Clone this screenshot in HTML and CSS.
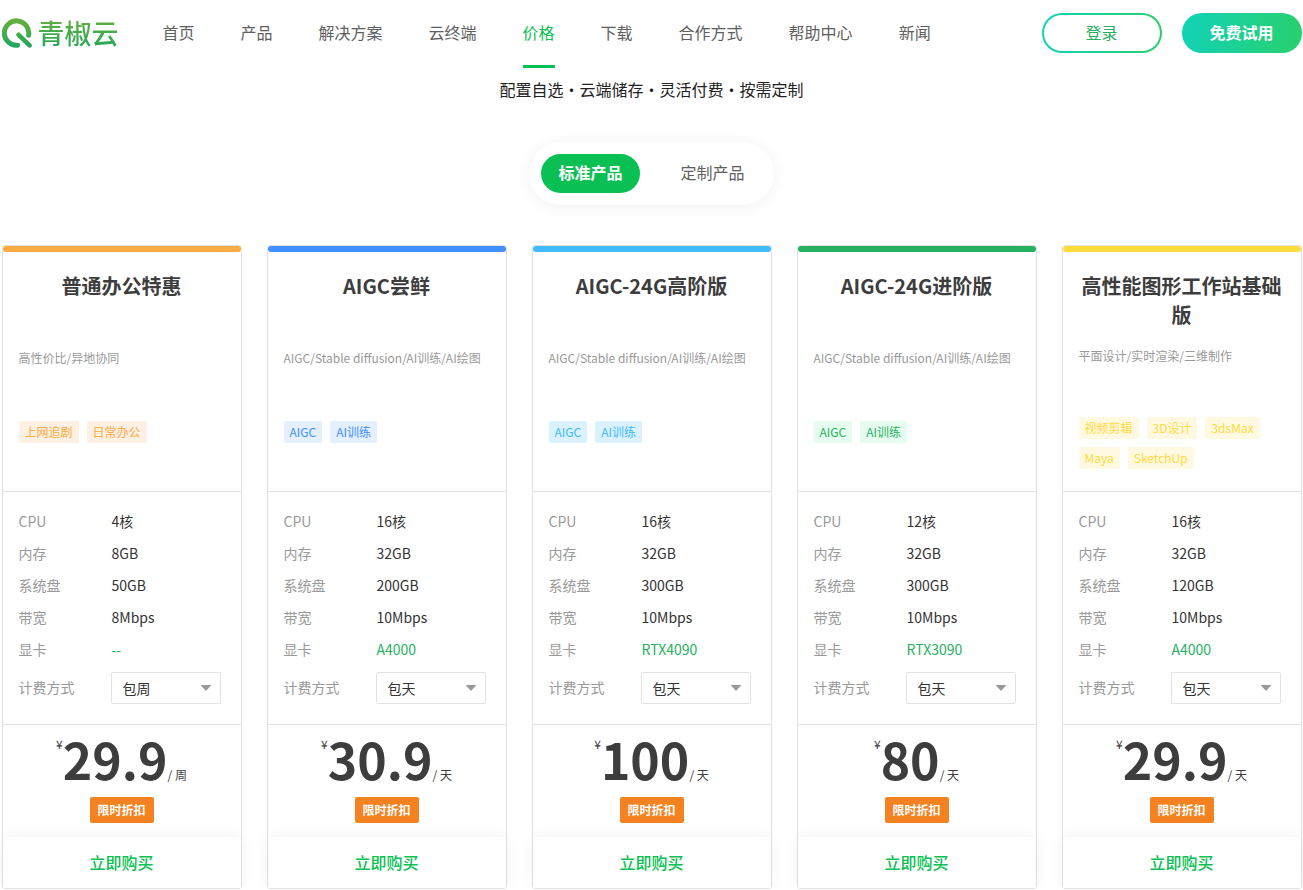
FILE: index.html
```html
<!DOCTYPE html>
<html lang="zh-CN">
<head>
<meta charset="utf-8">
<meta name="viewport" content="width=device-width, initial-scale=1">
<title>青椒云 - 价格</title>
<link rel="stylesheet" href="styles.css">
</head>
<body>
<header class="header container">
  <a class="logo" href="#">
    <svg class="logo-mark" viewBox="0 0 30 30" width="30" height="30" aria-hidden="true">
      <defs>
        <linearGradient id="leaf" gradientUnits="userSpaceOnUse" x1="0" y1="0" x2="0" y2="30">
          <stop offset="0" stop-color="#6ab03c"/>
          <stop offset="1" stop-color="#1fa65c"/>
        </linearGradient>
      </defs>
      <path d="M26.6 17.2A12.2 12.2 0 1 0 15.6 27.2" fill="none" stroke="url(#leaf)" stroke-width="5" stroke-linecap="round"/>
      <path d="M16.6 16.8L27.6 27.4" fill="none" stroke="url(#leaf)" stroke-width="4.6" stroke-linecap="round"/>
    </svg>
    <span class="logo-text">青椒云</span>
  </a>
  <nav class="nav">
    <a href="#">首页</a>
    <a href="#">产品</a>
    <a href="#">解决方案</a>
    <a href="#">云终端</a>
    <a href="#" class="active" aria-current="page">价格</a>
    <a href="#">下载</a>
    <a href="#">合作方式</a>
    <a href="#">帮助中心</a>
    <a href="#">新闻</a>
  </nav>
  <div class="account">
    <button type="button" class="btn btn-login">登录</button>
    <button type="button" class="btn btn-trial">免费试用</button>
  </div>
</header>

<main class="container">
  <p class="tagline">配置自选・云端储存・灵活付费・按需定制</p>
  <div class="tabs">
    <button type="button" class="tab selected">标准产品</button>
    <button type="button" class="tab">定制产品</button>
  </div>

  <section class="plans">
    <article class="plan plan-orange">
      <div class="plan-head">
        <h2>普通办公特惠</h2>
        <p class="desc">高性价比/异地协同</p>
        <div class="tags"><span>上网追剧</span><span>日常办公</span></div>
      </div>
      <div class="plan-body">
        <dl class="specs">
          <dt>CPU</dt><dd>4核</dd>
          <dt>内存</dt><dd>8GB</dd>
          <dt>系统盘</dt><dd>50GB</dd>
          <dt>带宽</dt><dd>8Mbps</dd>
          <dt>显卡</dt><dd class="gpu">--</dd>
        </dl>
        <div class="billing">
          <label for="billing-1">计费方式</label>
          <div class="select"><select id="billing-1"><option>包周</option><option>包天</option></select></div>
        </div>
      </div>
      <div class="plan-price">
        <p class="price"><span class="currency">¥</span><strong>29.9</strong><span class="unit">/ 周</span></p>
        <span class="badge">限时折扣</span>
      </div>
      <button type="button" class="buy">立即购买</button>
    </article>

    <article class="plan plan-blue">
      <div class="plan-head">
        <h2>AIGC尝鲜</h2>
        <p class="desc">AIGC/Stable diffusion/AI训练/AI绘图</p>
        <div class="tags"><span>AIGC</span><span>AI训练</span></div>
      </div>
      <div class="plan-body">
        <dl class="specs">
          <dt>CPU</dt><dd>16核</dd>
          <dt>内存</dt><dd>32GB</dd>
          <dt>系统盘</dt><dd>200GB</dd>
          <dt>带宽</dt><dd>10Mbps</dd>
          <dt>显卡</dt><dd class="gpu">A4000</dd>
        </dl>
        <div class="billing">
          <label for="billing-2">计费方式</label>
          <div class="select"><select id="billing-2"><option>包天</option><option>包周</option></select></div>
        </div>
      </div>
      <div class="plan-price">
        <p class="price"><span class="currency">¥</span><strong>30.9</strong><span class="unit">/ 天</span></p>
        <span class="badge">限时折扣</span>
      </div>
      <button type="button" class="buy">立即购买</button>
    </article>

    <article class="plan plan-sky">
      <div class="plan-head">
        <h2>AIGC-24G高阶版</h2>
        <p class="desc">AIGC/Stable diffusion/AI训练/AI绘图</p>
        <div class="tags"><span>AIGC</span><span>AI训练</span></div>
      </div>
      <div class="plan-body">
        <dl class="specs">
          <dt>CPU</dt><dd>16核</dd>
          <dt>内存</dt><dd>32GB</dd>
          <dt>系统盘</dt><dd>300GB</dd>
          <dt>带宽</dt><dd>10Mbps</dd>
          <dt>显卡</dt><dd class="gpu">RTX4090</dd>
        </dl>
        <div class="billing">
          <label for="billing-3">计费方式</label>
          <div class="select"><select id="billing-3"><option>包天</option><option>包周</option></select></div>
        </div>
      </div>
      <div class="plan-price">
        <p class="price"><span class="currency">¥</span><strong>100</strong><span class="unit">/ 天</span></p>
        <span class="badge">限时折扣</span>
      </div>
      <button type="button" class="buy">立即购买</button>
    </article>

    <article class="plan plan-green">
      <div class="plan-head">
        <h2>AIGC-24G进阶版</h2>
        <p class="desc">AIGC/Stable diffusion/AI训练/AI绘图</p>
        <div class="tags"><span>AIGC</span><span>AI训练</span></div>
      </div>
      <div class="plan-body">
        <dl class="specs">
          <dt>CPU</dt><dd>12核</dd>
          <dt>内存</dt><dd>32GB</dd>
          <dt>系统盘</dt><dd>300GB</dd>
          <dt>带宽</dt><dd>10Mbps</dd>
          <dt>显卡</dt><dd class="gpu">RTX3090</dd>
        </dl>
        <div class="billing">
          <label for="billing-4">计费方式</label>
          <div class="select"><select id="billing-4"><option>包天</option><option>包周</option></select></div>
        </div>
      </div>
      <div class="plan-price">
        <p class="price"><span class="currency">¥</span><strong>80</strong><span class="unit">/ 天</span></p>
        <span class="badge">限时折扣</span>
      </div>
      <button type="button" class="buy">立即购买</button>
    </article>

    <article class="plan plan-yellow plan-dense">
      <div class="plan-head">
        <h2>高性能图形工作站基础版</h2>
        <p class="desc">平面设计/实时渲染/三维制作</p>
        <div class="tags"><span>视频剪辑</span><span>3D设计</span><span>3dsMax</span><span>Maya</span><span>SketchUp</span></div>
      </div>
      <div class="plan-body">
        <dl class="specs">
          <dt>CPU</dt><dd>16核</dd>
          <dt>内存</dt><dd>32GB</dd>
          <dt>系统盘</dt><dd>120GB</dd>
          <dt>带宽</dt><dd>10Mbps</dd>
          <dt>显卡</dt><dd class="gpu">A4000</dd>
        </dl>
        <div class="billing">
          <label for="billing-5">计费方式</label>
          <div class="select"><select id="billing-5"><option>包天</option><option>包周</option></select></div>
        </div>
      </div>
      <div class="plan-price">
        <p class="price"><span class="currency">¥</span><strong>29.9</strong><span class="unit">/ 天</span></p>
        <span class="badge">限时折扣</span>
      </div>
      <button type="button" class="buy">立即购买</button>
    </article>
  </section>
</main>
</body>
</html>
```
FILE: styles.css
```css
* { box-sizing: border-box; margin: 0; padding: 0; }

body {
  background: #fff;
  color: #3d3d3d;
  font-family: "Noto Sans CJK SC", sans-serif;
  font-size: 14px;
}

button, select { font: inherit; cursor: pointer; }
a { color: inherit; text-decoration: none; }

.container { max-width: 1300px; margin: 0 auto; }

/* Header */
.header { display: flex; align-items: center; height: 68px; }
.logo { display: flex; align-items: center; gap: 6px; padding-bottom: 2px; }
.logo-mark { display: block; }
.logo-text {
  font-size: 27px;
  line-height: 36px;
  font-weight: 500;
  background: linear-gradient(#6ab03c, #1fa65c);
  -webkit-background-clip: text;
  background-clip: text;
  color: transparent;
}
.nav {
  display: flex;
  flex: 1;
  gap: 46px;
  margin-left: 44px;
  font-size: 16px;
  line-height: 64px;
  color: #606060;
}
.nav a { height: 68px; border-bottom: 3px solid transparent; white-space: nowrap; }
.nav .active { color: #0abf53; border-color: #0abf53; }

.account { display: flex; gap: 20px; padding-bottom: 2px; }
.btn { width: 120px; height: 40px; padding-bottom: 2px; border-radius: 20px; font-size: 16px; }
.btn-login {
  border: 2px solid transparent;
  background:
    linear-gradient(#fff, #fff) padding-box,
    linear-gradient(90deg, #12d2b8, #28d06c) border-box;
  color: #27ae60;
}
.btn-trial {
  border: 0;
  background: linear-gradient(100deg, #12d2b8, #28d06c);
  color: #fff;
  font-weight: 700;
}

/* Intro */
.tagline { padding: 9px 0 1px; text-align: center; font-size: 16px; line-height: 24px; color: #222; }
.tabs {
  display: flex;
  gap: 24px;
  width: fit-content;
  margin: 40px auto;
  padding: 12px;
  border-radius: 32px;
  box-shadow: 0 2px 16px rgba(0, 0, 0, .06);
}
.tab {
  height: 39px;
  padding: 0 17px 3px;
  border: 0;
  border-radius: 20px;
  background: none;
  font-size: 16px;
  color: #606060;
}
.tab.selected { background: #0abf53; color: #fff; font-weight: 700; }

/* Plan cards */
.plans { display: grid; grid-template-columns: repeat(5, 1fr); gap: 25px; }
.plan {
  display: flex;
  flex-direction: column;
  border: 1px solid #e2e2e2;
  border-radius: 3px;
}
.plan::before { content: ""; height: 6px; border-radius: 3px; background: var(--accent); }

.plan-orange { --accent: #faab43; --tag: #faab43; --tag-bg: #fef0e2; }
.plan-blue { --accent: #4090ff; --tag: #4090ff; --tag-bg: #e4efff; }
.plan-sky { --accent: #40bcff; --tag: #40b8ff; --tag-bg: #daf2ff; }
.plan-green { --accent: #27b15f; --tag: #27b15f; --tag-bg: #e4fdef; }
.plan-yellow { --accent: #ffdb3b; --tag: #ffdb3b; --tag-bg: #fff9e2; }

.plan-head { min-height: 240px; padding: 19px 16px 16px; border-bottom: 1px solid #e2e2e2; }
.plan-head h2 { min-height: 60px; text-align: center; font-size: 20px; line-height: 29px; font-weight: 700; }
.desc { min-height: 54px; margin: 18px 0; font-size: 12px; line-height: 18px; color: #999; }
.tags { display: flex; flex-wrap: wrap; gap: 8px; font-size: 12px; line-height: 22px; }
.tags span { padding: 0 6px; border-radius: 2px; background: var(--tag-bg); color: var(--tag); }
.plan-dense h2 { min-height: 58px; }
.plan-dense .desc { min-height: 52px; }

.plan-body { padding: 13px 20px 20px 16px; border-bottom: 1px solid #e2e2e2; }
.specs { display: grid; grid-template-columns: 93px 1fr; line-height: 32px; }
.specs dt, .billing label { color: #999; }
.specs dd { color: #333; }
.specs .gpu { color: #27b15f; }
.billing { display: grid; grid-template-columns: 92px 1fr; margin-top: 7px; line-height: 30px; }
.select { position: relative; }
.select::after {
  content: "";
  position: absolute;
  right: 9px;
  top: 13px;
  width: 11px;
  height: 6px;
  background: #999;
  clip-path: polygon(0 0, 100% 0, 50% 100%);
  pointer-events: none;
}
.select select {
  display: block;
  width: 100%;
  height: 32px;
  padding: 0 11px 2px;
  border: 1px solid #e2e2e2;
  border-radius: 2px;
  background: #fff;
  color: #333;
  appearance: none;
}

.plan-price { padding-bottom: 14px; text-align: center; }
.price { display: flex; justify-content: center; height: 72px; font-size: 12px; }
.price strong { font-size: 50px; line-height: 66px; }
.currency { padding-top: 10px; line-height: 18px; }
.unit { align-self: flex-end; padding-bottom: 13px; line-height: 18px; }
.badge {
  display: block;
  width: 64px;
  margin: 0 auto;
  border-radius: 2px;
  background: #f58220;
  color: #fff;
  font-size: 12px;
  line-height: 26px;
  font-weight: 700;
}
.buy {
  height: 51px;
  padding-bottom: 1px;
  border: 0;
  background: #fff;
  box-shadow: 0 0 16px rgba(0, 0, 0, .06);
  clip-path: inset(-20px -12px 0 -12px);
  font-size: 16px;
  font-weight: 500;
  color: #0abf53;
}
```
